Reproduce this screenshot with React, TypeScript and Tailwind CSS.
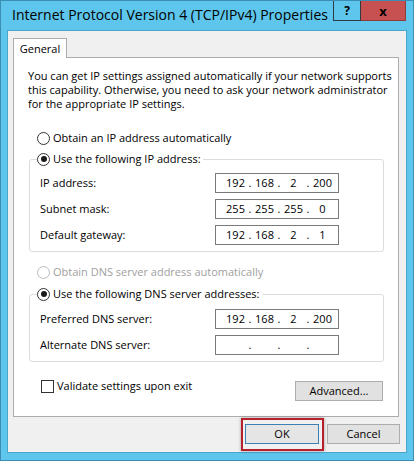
import React from "react";

const font = { fontFamily: '"Open Sans", "Noto Sans", sans-serif' };

function Radio({ checked, disabled }: { checked?: boolean; disabled?: boolean }) {
  return (
    <span
      className={`flex h-[13px] w-[13px] shrink-0 items-center justify-center rounded-full border bg-white ${
        disabled ? "border-[#bcbcbc]" : "border-[#333333]"
      }`}
    >
      {checked && <span className="h-[6px] w-[6px] rounded-full bg-[#1a1a1a]" />}
    </span>
  );
}

function IpBox({ parts }: { parts: string[] }) {
  return (
    <div className="flex h-[20px] w-[124px] items-center border border-[#7a7a7a] bg-white pl-[8px] text-black">
      {parts.map((p, i) => (
        <React.Fragment key={i}>
          <span className="w-[23px] text-center">{p}</span>
          {i < 3 && <span className="w-[6px] text-center">.</span>}
        </React.Fragment>
      ))}
    </div>
  );
}

function Field({ label, parts }: { label: string; parts: string[] }) {
  return (
    <div className="flex h-[20px] items-center">
      <span className="w-[185px] pl-[10px]">{label}</span>
      <IpBox parts={parts} />
    </div>
  );
}

export default function App() {
  return (
    <div
      className="flex h-[461px] w-[414px] flex-col overflow-hidden border border-[#3b8db3] bg-[#5ec6ec] text-[11px] leading-[14px] text-black"
      style={font}
    >
      {/* title bar */}
      <div className="flex h-[29px] shrink-0 items-start">
        <span className="whitespace-nowrap pl-[11px] pt-[5px] text-[14px] leading-[18px] text-black">
          Internet Protocol Version 4 (TCP/IPv4) Properties
        </span>
        <div className="ml-auto mr-[7px] flex">
          <div className="flex h-[20px] w-[28px] items-center justify-center border border-t-0 border-[#2f3b40] bg-[#5ec6ec] text-[12px] font-bold">
            ?
          </div>
          <div className="flex h-[20px] w-[45px] items-center justify-center border border-t-0 border-l-0 border-[#8e3a3a] bg-[#c75050] text-[13px] font-bold text-black">
            x
          </div>
        </div>
      </div>

      {/* client area */}
      <div className="mx-[6px] mb-[7px] flex flex-1 flex-col border border-[#4aa6cc] bg-[#f0f0f0] pl-[5px] pr-[6px] pt-[7px]">
        <div className="relative z-10 -mb-px flex h-[20px] w-[54px] items-center justify-center border border-b-0 border-[#acacac] bg-white">
          General
        </div>
        <div className="flex h-[360px] w-[386px] flex-col border border-[#acacac] bg-white">
          <p className="mt-[11px] whitespace-nowrap pl-[14px]">
            You can get IP settings assigned automatically if your network supports
            <br />
            this capability. Otherwise, you need to ask your network administrator
            <br />
            for the appropriate IP settings.
          </p>

          <div className="mt-[19px] flex h-[16px] items-center gap-[3px] pl-[23px]">
            <Radio />
            <span>Obtain an IP address automatically</span>
          </div>

          <div className="ml-[15px] mr-[14px] mt-[13px] flex flex-col rounded-[3px] border border-[#dcdcdc] pb-[6px]">
            <div className="-mt-[9px] flex h-[16px] items-center">
              <div className="ml-[7px] flex items-center gap-[3px] bg-white pr-[2px]">
                <Radio checked />
                <span>Use the following IP address:</span>
              </div>
            </div>
            <div className="mt-[6px] flex flex-col gap-[6px]">
              <Field label="IP address:" parts={["192", "168", "2", "200"]} />
              <Field label="Subnet mask:" parts={["255", "255", "255", "0"]} />
              <Field label="Default gateway:" parts={["192", "168", "2", "1"]} />
            </div>
          </div>

          <div className="mt-[12px] flex h-[16px] items-center gap-[3px] pl-[23px] text-[#a0a0a0]">
            <Radio disabled />
            <span>Obtain DNS server address automatically</span>
          </div>

          <div className="ml-[15px] mr-[14px] mt-[14px] flex flex-col rounded-[3px] border border-[#dcdcdc] pb-[6px]">
            <div className="-mt-[9px] flex h-[16px] items-center">
              <div className="ml-[7px] flex items-center gap-[3px] bg-white pr-[2px]">
                <Radio checked />
                <span>Use the following DNS server addresses:</span>
              </div>
            </div>
            <div className="mt-[7px] flex flex-col gap-[6px]">
              <Field label="Preferred DNS server:" parts={["192", "168", "2", "200"]} />
              <Field label="Alternate DNS server:" parts={["", "", "", ""]} />
            </div>
          </div>

          <div className="mt-[17px] flex items-start pl-[27px] pr-[15px]">
            <div className="flex items-center gap-[3px]">
              <span className="h-[13px] w-[13px] border border-[#333333] bg-white" />
              <span>Validate settings upon exit</span>
            </div>
            <button className="ml-auto mt-[2px] flex h-[20px] w-[88px] items-center justify-center border border-[#adadad] bg-[#e1e1e1]">
              Advanced...
            </button>
          </div>
        </div>

        <div className="mt-[7px] flex justify-end gap-[8px] pr-[0px]">
          <div className="relative">
            <span className="absolute -bottom-[7px] -left-[4px] -right-[5px] -top-[6px] border-2 border-[#b5202a] shadow-[0_0_3px_rgba(0,0,0,0.35)]" />
            <button className="relative flex h-[20px] w-[74px] items-center justify-center border border-[#3c7fb1] bg-[#e5e5e5]">
              OK
            </button>
          </div>
          <button className="flex h-[20px] w-[73px] items-center justify-center border border-[#adadad] bg-[#e1e1e1]">
            Cancel
          </button>
        </div>
      </div>
    </div>
  );
}
